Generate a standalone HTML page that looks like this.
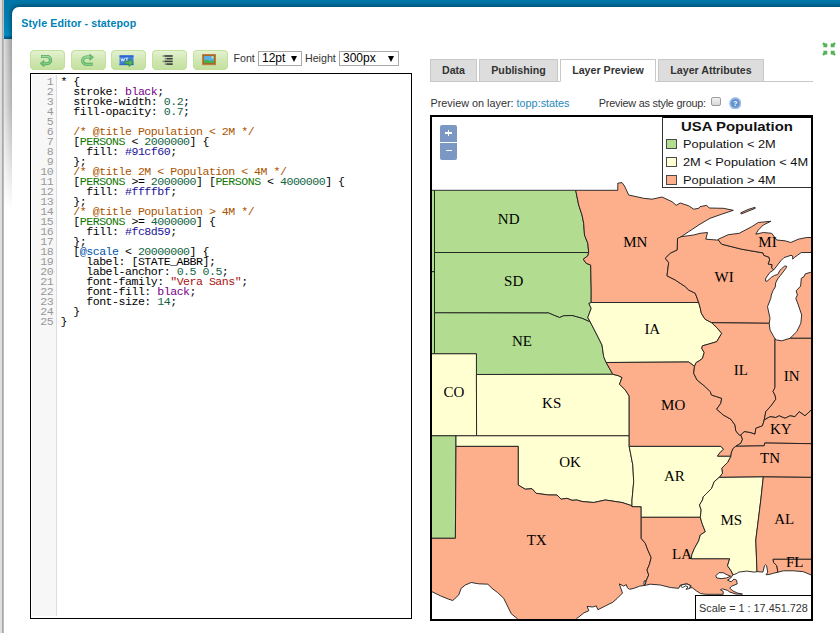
<!DOCTYPE html>
<html>
<head>
<meta charset="utf-8">
<title>Style Editor - statepop</title>
<style>
html,body{margin:0;padding:0;}
body{width:840px;height:633px;overflow:hidden;background:#fff;position:relative;font-family:"Liberation Sans",sans-serif;font-size:12px;color:#333;}
.abs{position:absolute;}
#bluetop{left:4px;top:0;width:836px;height:39px;background:linear-gradient(#0077a9 0,#0079ab 18%,#0089bf 80%,#008fc6 90%,#00689a 95%,#005a85 100%);}
#leftstrip{left:0;top:0;width:4px;height:633px;background:linear-gradient(90deg,#e2e2e2 0,#dcdcdc 45%,#a9a9a9 62%,#9f9f9f 80%,#e8e8e8 100%);}
#leftgrey{left:4px;top:39px;width:8px;height:170px;background:linear-gradient(90deg,#dedede,#a0a0a0);}
#leftfade{left:4px;top:39px;width:8px;height:170px;background:linear-gradient(rgba(255,255,255,0) 0,rgba(255,255,255,0.2) 40%,#fff 100%);}
#panel{left:12px;top:7px;width:840px;height:640px;background:#fff;border-radius:7px 0 0 0;}
#shclip{left:4px;top:0;width:836px;height:39px;overflow:hidden;}
#shclip div{position:absolute;left:8px;top:7px;width:840px;height:640px;border-radius:7px 0 0 0;box-shadow:0 0 5px 1px rgba(0,30,50,0.65);}
#title{left:21.300px;top:16px;letter-spacing:0.080px;font-weight:bold;font-size:10.67px;line-height:15px;color:#0082b6;white-space:nowrap;}
.tb{top:50px;width:35px;height:20px;border-radius:4.500px;background:linear-gradient(#e6f3d5 0,#d2e8b5 45%,#c3e09e 100%);box-shadow:inset 0 0 0 1px rgba(193,224,154,0.95);}
.tb svg{position:absolute;left:0;top:0;}
.lbl{font-size:10.67px;line-height:12px;color:#333;white-space:nowrap;}
.sel{top:51px;height:13px;border:1px solid #a9a9a9;background:#fff;font-size:12px;line-height:13px;color:#000;white-space:nowrap;}
.sel span{position:absolute;left:3px;top:0;}
.sel i{position:absolute;right:4px;top:4px;width:0;height:0;border-left:3.5px solid transparent;border-right:3.5px solid transparent;border-top:6px solid #000;}
#editor{left:30px;top:73px;width:380px;height:544px;border:1px solid #000;background:#fff;}
#gutter{left:1px;top:1px;width:24px;height:541px;background:#f7f7f7;border-right:1px solid #ddd;}
.ln,.cd{font-family:"Liberation Mono",monospace;font-size:11.6px;letter-spacing:-0.5px;line-height:10px;white-space:pre;margin:0;}
.ln{left:1px;top:2.750px;width:21.200px;text-align:right;color:#999;}
.cd{left:29.400px;top:2.750px;color:#000;}
.k{color:#708}.n{color:#164}.c{color:#a50}.v{color:#170}.a{color:#219}.d{color:#05a}.s{color:#a11}
.tab{top:59px;height:20.500px;border:1px solid #c8c8c8;background:#dddddd;font-weight:bold;font-size:10.67px;line-height:21px;color:#333;text-align:center;white-space:nowrap;}
.tab.on{background:#fff;border-bottom-color:#fff;height:20.500px;}
#tabline{left:430px;top:80.500px;width:383px;height:1px;background:#c8c8c8;}
.pl{top:96px;font-size:10.83px;line-height:14px;color:#333;white-space:nowrap;}
#cb{left:711.300px;top:96.800px;width:7.700px;height:7px;border:1px solid #9c9c9c;border-radius:2px;background:linear-gradient(#f2f2f2,#d8d8d8);}
#help{left:728.800px;top:96.600px;width:12.600px;height:12.600px;}
#map{left:430px;top:115px;width:379px;height:502px;border:2px solid #000;background:#fff;overflow:hidden;}
#fs{left:821.900px;top:41.900px;}
.sw{left:3px;width:9px;height:8px;border:1px solid #4a4a4a;}
.li{left:20.300px;font-size:11px;line-height:14px;color:#111;white-space:nowrap;transform:scaleX(1.162);transform-origin:0 0;}
</style>
</head>
<body>
<div class="abs" id="bluetop"></div>
<div class="abs" id="leftgrey"></div>
<div class="abs" id="leftfade"></div>
<div class="abs" id="leftstrip"></div>
<div class="abs" id="shclip"><div></div></div>
<div class="abs" id="panel"></div>
<div class="abs" id="title">Style Editor - statepop</div>

<!-- toolbar -->
<div class="abs tb" style="left:30px"><svg width="36" height="20" viewBox="0 0 36 20"><path d="M11 6.550H17A3.570 3.570 0 0 1 17 13.700H13.500" fill="none" stroke="#47a254" stroke-width="3"/><path d="M13.900 10.600V16.600L10.100 13.500Z" fill="#74c47a" stroke="#47a254" stroke-width="0.700" stroke-linejoin="round"/><path d="M11.400 6.550H17A3.570 3.570 0 0 1 17 13.700H13.500" fill="none" stroke="#85cf8a" stroke-width="1.700"/><path d="M11.600 6.200H17A3.900 3.900 0 0 1 20.500 8.500" fill="none" stroke="#c3eac4" stroke-width="0.600"/></svg></div>
<div class="abs tb" style="left:70.750px"><svg width="36" height="20" viewBox="0 0 36 20"><path d="M21.650 14.350H15.350A3.650 3.650 0 0 1 15.350 7.050H19" fill="none" stroke="#47a254" stroke-width="3"/><path d="M18.800 4.300V10.300L22.500 7.200Z" fill="#74c47a" stroke="#47a254" stroke-width="0.700" stroke-linejoin="round"/><path d="M21.300 14.350H15.350A3.650 3.650 0 0 1 15.350 7.050H19" fill="none" stroke="#85cf8a" stroke-width="1.700"/><path d="M12 9A3.900 3.900 0 0 1 15.350 6.700H18.600" fill="none" stroke="#c3eac4" stroke-width="0.600"/></svg></div>
<div class="abs tb" style="left:111.100px"><svg width="36" height="20" viewBox="0 0 36 20"><rect x="8.500" y="5.400" width="14" height="9.700" fill="#3f7fe0"/><rect x="8.500" y="5.400" width="14" height="1.500" fill="#2d66cc"/><rect x="8.500" y="13.800" width="14" height="1.300" fill="#2f6bd0"/><path d="M10 8.200l.9 3 .9-2.500.9 2.500.9-3M14.500 8.200h2.600M15.800 8.200v3" fill="none" stroke="#e6effd" stroke-width="0.900"/><path d="M13.800 11.300h4.200v-2.400l4.400 3.800-4.400 3.800v-2.400h-4.200z" fill="#58b45c" stroke="#2f8038" stroke-width="0.700" stroke-linejoin="round"/></svg></div>
<div class="abs tb" style="left:152.250px"><svg width="36" height="20" viewBox="0 0 36 20"><g fill="#7d8474"><rect x="10.600" y="5.200" width="3" height="1.600"/><rect x="12.700" y="7.900" width="3" height="1.600"/><rect x="10.600" y="10.600" width="3" height="1.600"/><rect x="12.700" y="13.300" width="3" height="1.600"/></g><g fill="#3a3a3a"><rect x="13" y="5.200" width="7.700" height="1.600"/><rect x="15" y="7.900" width="5.700" height="1.600"/><rect x="13" y="10.600" width="7.700" height="1.600"/><rect x="15" y="13.300" width="5.700" height="1.600"/></g></svg></div>
<div class="abs tb" style="left:193px"><svg width="36" height="20" viewBox="0 0 36 20"><rect x="9.100" y="4" width="13.900" height="11.100" fill="#a7672c"/><rect x="9.500" y="4.400" width="13.100" height="10.300" fill="none" stroke="#c58a4a" stroke-width="0.700"/><rect x="11.100" y="6" width="9.900" height="7" fill="#5aaeea"/><path d="M11.100 10.800c2-1.900 4-1 5.400.2 1.500-1 3-1.100 4.500-.3v2.300h-9.900z" fill="#43b04a"/><circle cx="19.500" cy="7.300" r="1.100" fill="#f7e35c"/></svg></div>
<div class="abs lbl" style="left:233.500px;top:52px">Font</div>
<div class="abs sel" style="left:258px;width:42px"><span>12pt</span><i></i></div>
<div class="abs lbl" style="left:305px;top:52px">Height</div>
<div class="abs sel" style="left:339px;width:58px"><span>300px</span><i></i></div>

<!-- editor -->
<div class="abs" id="editor">
<div class="abs" id="gutter"></div>
<pre class="abs ln">1
2
3
4
5
6
7
8
9
10
11
12
13
14
15
16
17
18
19
20
21
22
23
24
25</pre>
<pre class="abs cd">* {
  stroke: <span class="k">black</span>;
  stroke-width: <span class="n">0.2</span>;
  fill-opacity: <span class="n">0.7</span>;

  <span class="c">/* @title Population &lt; 2M */</span>
  [<span class="v">PERSONS</span> &lt; <span class="n">2000000</span>] {
    fill: <span class="a">#91cf60</span>;
  };
  <span class="c">/* @title 2M &lt; Population &lt; 4M */</span>
  [<span class="v">PERSONS</span> &gt;= <span class="n">2000000</span>] [<span class="v">PERSONS</span> &lt; <span class="n">4000000</span>] {
    fill: <span class="a">#ffffbf</span>;
  };
  <span class="c">/* @title Population &gt; 4M */</span>
  [<span class="v">PERSONS</span> &gt;= <span class="n">4000000</span>] {
    fill: <span class="a">#fc8d59</span>;
  };
  [<span class="d">@scale</span> &lt; <span class="n">20000000</span>] {
    label: [STATE_ABBR];
    label-anchor: <span class="n">0.5</span> <span class="n">0.5</span>;
    font-family: <span class="s">"Vera Sans"</span>;
    font-fill: <span class="k">black</span>;
    font-size: <span class="n">14</span>;
  }
}</pre>
</div>

<!-- tabs -->
<div class="abs" id="tabline"></div>
<div class="abs tab" style="left:430px;width:45px">Data</div>
<div class="abs tab" style="left:479px;width:77px">Publishing</div>
<div class="abs tab on" style="left:560px;width:94px">Layer Preview</div>
<div class="abs tab" style="left:658px;width:104px">Layer Attributes</div>
<div class="abs pl" style="left:430.500px">Preview on layer: <span style="color:#2a88b8">topp:states</span></div>
<div class="abs pl" style="left:598.800px;letter-spacing:-0.210px">Preview as style group:</div>
<div class="abs" id="cb"></div>
<svg class="abs" id="help" viewBox="0 0 12.600 12.600"><circle cx="6.300" cy="6.300" r="6.200" fill="#adc6e8"/><circle cx="6.300" cy="6.300" r="5.200" fill="#8fb1de"/><circle cx="6.300" cy="6.300" r="4.100" fill="#5d90d0"/><text x="6.300" y="9" font-family="Liberation Sans" font-weight="bold" font-size="7.500" fill="#fff" text-anchor="middle">?</text></svg>

<!-- fullscreen icon -->
<svg class="abs" id="fs" width="14" height="14" viewBox="0 0 14 14"><g fill="#55b058"><path d="M0.200 1.700L1.700 0.200L3.300 1.600L5.300 1.400L5.300 5.300L1.300 5.300L1.500 3.200Z"/><path transform="translate(14,0) scale(-1,1)" d="M0.200 1.700L1.700 0.200L3.300 1.600L5.300 1.400L5.300 5.300L1.300 5.300L1.500 3.200Z"/><path transform="translate(0,14) scale(1,-1)" d="M0.200 1.700L1.700 0.200L3.300 1.600L5.300 1.400L5.300 5.300L1.300 5.300L1.500 3.200Z"/><path transform="translate(14,14) scale(-1,-1)" d="M0.200 1.700L1.700 0.200L3.300 1.600L5.300 1.400L5.300 5.300L1.300 5.300L1.500 3.200Z"/></g></svg>

<!-- map -->
<div class="abs" id="map">
<!--MAPSTART-->
<svg class="abs" style="left:0;top:0" width="379" height="502" viewBox="432 117 379 502">
<g stroke="#1c1c1c" stroke-width="0.9" stroke-linejoin="round">
<path fill="#b2dd90" d="M428 190.3L434.5 190.3L434.5 271.7L428 271.7Z"/>
<path fill="#b2dd90" d="M428 271.7L434.5 271.7L434.5 353.8L428 353.8Z"/>
<path fill="#b2dd90" d="M434.5 190.3L575.7 190.3L578.7 205L582 215L583.7 223.3L584.5 235L587.8 243.3L588.7 252.5L434.5 252.5Z"/>
<path fill="#b2dd90" d="M434.5 252.5L588.7 252.5L587.8 255.8L583.3 259.2L586.2 263.3L590.7 265L591.2 290L591.2 302.5L588.9 303.5L591.2 308.3L587.8 317.5L590.3 322L582 318.3L572 315.5L563.7 315.8L559.5 317.5L554 315.3L548.7 313L434.5 312.8Z"/>
<path fill="#b2dd90" d="M434.5 312.8L548.7 313L554 315.3L559.5 317.5L563.7 315.8L572 315.5L582 318.3L590.3 322L597 335L602 345L603.7 356.7L606.2 362.5L612.8 374.3L476.4 374.5L476.4 353.8L434.5 353.8Z"/>
<path fill="#ffffd2" d="M428 353.8L476.4 353.8L476.6 435.8L428 435.8Z"/>
<path fill="#ffffd2" d="M476.4 374.5L612.8 374.3L618 375.5L622 377.5L619.5 384.2L625.3 390L629.2 396L629.2 435.8L476.6 435.8Z"/>
<path fill="#b2dd90" d="M428 435.8L456 435.8L455.4 538.3L428 538.3Z"/>
<path fill="#ffffd2" d="M456 435.8L629.2 435.8L629.2 446.4L632.8 465L633.7 481.7L632 500L632 505.8L622 502.5L605.3 500L593.7 502.5L582 501.5L577 500L572 500.3L567 498.3L561.2 499.2L557 495L548.7 495L536.2 493.3L532 488.7L525.3 489.2L518.2 485L518.2 446.4L456 446.4Z"/>
<path fill="#fdaf8b" d="M428 538.3L455.4 538.3L456 446.4L518.2 446.4L518.2 485L525.3 489.2L532 488.7L536.2 493.3L548.7 495L557 495L561.2 499.2L567 498.3L572 500.3L577 500L582 501.5L593.7 502.5L605.3 500L622 502.5L632 505.8L632 506.6L641.2 506.7L641.2 517.3L641.2 538.3L645.3 543.3L647.8 550L651.2 557.5L649.5 564.2L647 570L648.7 575L646.2 580.8L644.5 585.5L639.7 586.1L634.3 588.2L629.5 589.3L627.3 587.7L626.3 584.5L623.6 586.1L619.3 583.9L620.4 587.1L622.5 593L617.2 598.4L612.9 602.2L605.4 605.9L597.9 609.7L596.3 605.9L592.5 607L587.1 606.4L588.8 610.7L583.9 612.9L576.4 618.8L570 626L521 626L517.5 618.8L511.3 613.8L507 605L503.7 598.3L497.5 592.5L492 588.3L487.8 584.2L478.7 583.8L471.2 582.5L465.3 585L461.2 588.3L458.7 595L452.8 600.5L448.7 599.2L440.3 595.8L432 591.7L428 590.7Z"/>
<path fill="#fdaf8b" d="M575.7 190.3L617.8 190.3L617.8 183.2L622 182.6L624.5 186L628.7 195L643.7 198.3L652 199.2L662 197L672 201.7L676.2 205.3L680.3 203L688.7 205.8L693.7 209.2L698.7 208.3L700 206.7L706.7 205.3L709.2 208L723.3 208.3L733.3 210.3L721.7 214.2L710 218.3L700 224.2L688.7 231.7L681.2 236.7L679.5 237.5L677.5 238.5L677.3 250L670.3 253.3L665.3 258.3L668.7 262.5L667 275.8L675.3 280L685.3 286.7L688.7 290L695.3 293.3L698.7 302.5L591.2 302.5L591.2 290L590.7 265L586.2 263.3L583.3 259.2L587.8 255.8L588.7 252.5L587.8 243.3L584.5 235L583.7 223.3L582 215L578.7 205L575.7 190.3Z"/>
<path fill="#ffffd2" d="M591.2 302.5L698.7 302.5L700.3 308.3L701.2 313L705 319.2L711.7 322.7L716.7 327.5L721.7 333.3L716.7 341.7L708.3 344.2L702.5 345.8L701.7 348.3L704.2 352.5L702.5 358.3L699 361L696.2 362.5L694.5 366.3L688.7 362L606.2 362.5L603.7 356.7L602 345L597 335L590.3 322L587.8 317.5L591.2 308.3L588.9 303.5L591.2 302.5Z"/>
<path fill="#fdaf8b" d="M606.2 362.5L688.7 362L694.5 366.3L693.7 373.3L697 380L705.3 386.7L710.3 391.7L711.5 395L716.7 396.7L721.7 398.3L720.8 403.3L716.7 409.2L723.3 415L730.8 419.2L735 425L735.8 430.8L739.2 435L740.8 435L742.5 439.2L740.8 443.3L735.8 446.3L733.3 448.3L731.5 452L730.8 456.3L717.5 456.3L717.5 455.8L720 452.5L723.3 449.2L720.8 446.4L629.2 446.4L629.2 435.8L629.2 396L625.3 390L619.5 384.2L622 377.5L618 375.5L612.8 374.3L606.2 362.5Z"/>
<path fill="#fdaf8b" d="M679.5 237.5L681.2 236.7L693.7 235L700 233.3L707.5 232.5L705.8 239.2L716.7 240L718.3 240L721.7 244.2L741.7 249.2L755 251.5L763 252.9L763.8 255.3L769 257.2L769.7 260L768.2 264L772.1 264.7L771.7 267.9L773.7 269.9L769.7 272.6L765.8 278.2L765.4 280.9L767 281.3L771.3 277.4L774.5 275.4L777.6 274.6L780 270.3L781.6 268.7L784.8 265.9L786.7 266.3L785.9 268.3L783.2 271.9L780.4 275.4L777.6 279L775.7 282.9L775.3 286.9L772.9 290.8L771.3 295L770.8 298.3L767.5 306.7L770 318.3L769.2 323.3L711.7 322.7L705 319.2L701.2 313L700.3 308.3L698.7 302.5L695.3 293.3L688.7 290L685.3 286.7L675.3 280L667 275.8L668.7 262.5L665.3 258.3L670.3 253.3L677.3 250L677.5 238.5L679.5 237.5Z"/>
<path fill="#fdaf8b" d="M718.3 240L718.3 239.2L728.3 234.7L739.2 233.3L751.7 226.7L758.3 222.5L770.8 221.3L763.3 225L758.3 230L755.8 234.2L763.3 232.5L771.7 233.3L776.7 240L785 240.8L790.8 242.5L798.3 239.2L806.7 237.5L816 237.5L816 252.5L801.3 252.5L797.4 255.3L794.2 257.6L792.7 259.2L792.7 256L791 255.3L784 257.6L780.8 260.8L773.7 269.9L771.7 267.9L772.1 264.7L768.2 264L769.7 260L769 257.2L763.8 255.3L763 252.9L755 251.5L741.7 249.2L721.7 244.2L718.3 240Z"/>
<path fill="#fdaf8b" d="M790 338.3L796.7 331.7L800.8 323.3L801.7 315L798.3 305L795.8 298.3L797.4 295L796.2 290.8L800.6 286.1L801.3 278.2L804.1 276.6L805.3 273.8L810.8 272.3L816 271.5L816 338.3Z"/>
<path fill="#fdaf8b" d="M711.7 322.7L769.2 323.3L770 330L773.3 335.8L775 338.8L775 387.5L773 391.5L775 395L775.8 399.2L771.7 405L765.8 411.7L764.2 420L762.5 425.8L755.8 428.3L755 434.2L750 432.5L744.2 431.7L740.8 435L739.2 435L735.8 430.8L735 425L730.8 419.2L723.3 415L716.7 409.2L720.8 403.3L721.7 398.3L716.7 396.7L711.5 395L710.3 391.7L705.3 386.7L697 380L693.7 373.3L694.5 366.3L696.2 362.5L699 361L702.5 358.3L704.2 352.5L701.7 348.3L702.5 345.8L708.3 344.2L716.7 341.7L721.7 333.3L716.7 327.5L711.7 322.7Z"/>
<path fill="#fdaf8b" d="M775 338.8L776.7 340L781.7 340.8L790 338.3L816 338.3L816 408L811.3 410L805 415.8L799.2 411.7L795 416.7L790 415.8L785 418.3L779.2 415.8L775.8 417.5L770 416.7L764.2 420L765.8 411.7L771.7 405L775.8 399.2L775 395L773 391.5L775 387.5L775 338.8Z"/>
<path fill="#fdaf8b" d="M740.8 435L744.2 431.7L750 432.5L755 434.2L755.8 428.3L762.5 425.8L764.2 420L770 416.7L775.8 417.5L779.2 415.8L785 418.3L790 415.8L795 416.7L799.2 411.7L805 415.8L811.3 410L816 408L816 443.7L811.3 443.7L764.7 443L764.2 445.8L735.8 446.3L740.8 443.3L742.5 439.2L740.8 435Z"/>
<path fill="#fdaf8b" d="M735.8 446.3L764.2 445.8L764.7 443L811.3 443.7L816 443.7L816 477.4L811.3 477.4L763.3 476.9L719.2 477.4L722.5 473.3L721.7 468.3L727.5 462.5L730.8 456.3L731.5 452L733.3 448.3L735.8 446.3Z"/>
<path fill="#ffffd2" d="M629.2 446.4L720.8 446.4L723.3 449.2L720 452.5L717.5 455.8L717.5 456.3L730.8 456.3L727.5 462.5L721.7 468.3L722.5 473.3L719.2 477.4L714.2 481.7L711.7 488.3L706.7 493.3L703.3 496.7L702.5 500L699.5 505L701.2 510L700.3 517.3L641.2 517.3L641.2 506.7L632 506.6L632 505.8L632 500L633.7 481.7L632.8 465L629.2 446.4Z"/>
<path fill="#fdaf8b" d="M641.2 517.3L700.3 517.3L702 523.3L705.3 531.7L700.3 535L698.7 540.8L694.5 548.3L692 554.2L691.2 558.7L730 558.7L729.7 558.7L727.5 565.7L731.3 571.1L732.9 574.8L730.7 578L727.5 580.2L731.3 581.8L733.9 579.1L736.6 580.2L737.2 583.9L731.8 586.1L729.7 588.2L732.9 590.9L737.2 593L742.5 594.1L736.1 594.1L729.7 592L727.5 590.4L722.2 588.8L720.5 589.8L723.2 591.4L723.2 594.3L714.6 594.3L706.1 594.3L700.7 593.6L696.4 590.9L692.1 587.6L689.5 588L691.2 585.8L687 583.8L680.3 585L678.7 588.3L670.3 587.5L660.3 585L650.3 584.2L644.5 585.5L646.2 580.8L648.7 575L647 570L649.5 564.2L651.2 557.5L647.8 550L645.3 543.3L641.2 538.3L641.2 517.3Z"/>
<path fill="#ffffd2" d="M719.2 477.4L763.3 476.9L760.8 500L755.8 540L757 571.6L754.3 572.1L746.8 571.1L738.8 572.1L736.1 573.8L732.9 574.8L731.3 571.1L727.5 565.7L729.7 558.7L691.2 558.7L692 554.2L694.5 548.3L698.7 540.8L700.3 535L705.3 531.7L702 523.3L700.3 517.3L701.2 510L699.5 505L702.5 500L703.3 496.7L706.7 493.3L711.7 488.3L714.2 481.7L719.2 477.4Z"/>
<path fill="#fdaf8b" d="M763.3 476.9L811.3 477.4L816 477.4L816 559.3L773.1 559.3L773.6 562.5L776.8 565.7L777.9 572.2L773.6 573.2L769.8 574.3L766.1 574.8L767.7 572.1L766.6 565.7L765.5 564.8L764.5 565.7L762.9 572.1L757 571.6L755.8 540L760.8 500L763.3 476.9Z"/>
<path fill="#fdaf8b" d="M816 559.3L773.1 559.3L773.6 562.5L776.8 565.7L777.9 572.2L783.3 570.8L793.3 570.8L803.3 571.7L811.3 575L816 576.5Z"/>
<path fill="#fdaf8b" d="M740.8 212.8L748 209.5L755 207.3L755.3 208.3L748 211.2L741.3 214Z"/>
<path fill="#fff" d="M715.7 575.9L718.9 572.7L723.2 572.7L727 574.8L730.6 576.2L726.4 578L721.1 578.6L716.8 578Z"/>
<path fill="#fff" d="M680.5 586L683 584.5L687 584L690.5 585.6L689.5 588.5L686 589.3L688 587L685.5 585.8L682.5 587.6Z"/>
<path fill="#fff" d="M644.2 581L645.8 580.5L645.5 584L643.8 584.5Z"/>
</g>
<g font-family="Liberation Serif" font-size="15" fill="#000" text-anchor="middle">
<text x="508.7" y="224.2">ND</text>
<text x="513.7" y="285.8">SD</text>
<text x="635.3" y="246.8">MN</text>
<text x="767.5" y="246.8">MI</text>
<text x="724.2" y="281.7">WI</text>
<text x="522" y="345.5">NE</text>
<text x="453.9" y="397.2">CO</text>
<text x="652.3" y="333.7">IA</text>
<text x="740.8" y="374.7">IL</text>
<text x="791.7" y="381.2">IN</text>
<text x="551.7" y="408">KS</text>
<text x="673.2" y="410.3">MO</text>
<text x="674.3" y="480.9">AR</text>
<text x="570" y="467.1">OK</text>
<text x="780.8" y="434.2">KY</text>
<text x="770" y="463.3">TN</text>
<text x="536.7" y="545">TX</text>
<text x="682" y="559.2">LA</text>
<text x="731.3" y="525.3">MS</text>
<text x="784.2" y="524.2">AL</text>
<text x="794.7" y="567.4">FL</text>
</g>
</svg>
<!--MAPEND-->
<!--OVERLAY-->
<div class="abs" style="left:8px;top:8px;width:17px;height:17px;border-radius:2px 2px 0 0;background:#7b98c4;"></div>
<div class="abs" style="left:8px;top:26px;width:17px;height:17px;border-radius:0 0 2px 2px;background:#7b98c4;"></div>
<div class="abs" style="left:13.300px;top:14.900px;width:6.400px;height:1.700px;background:#fff;"></div>
<div class="abs" style="left:15.650px;top:12.500px;width:1.700px;height:6.400px;background:#fff;"></div>
<div class="abs" style="left:13.600px;top:32.900px;width:6.300px;height:1.500px;background:#fff;"></div>
<div class="abs" id="legend" style="left:230px;top:0;width:149px;height:71px;background:#fff;border-left:1px solid #333;border-bottom:1px solid #333;box-sizing:border-box;"><div class="abs" style="left:0;top:0;width:148px;height:0.600px;background:#000"></div>
<div class="abs" style="left:0;top:1.500px;width:148px;text-align:center;font-weight:bold;font-size:13px;line-height:16px;color:#111;transform:scaleX(1.145);transform-origin:74.500px 0;">USA Population</div>
<div class="abs sw" style="top:22px;background:#b2dd90"></div><div class="abs li" style="top:20px">Population &lt; 2M</div>
<div class="abs sw" style="top:40px;background:#ffffd2"></div><div class="abs li" style="top:38px">2M &lt; Population &lt; 4M</div>
<div class="abs sw" style="top:58px;background:#fdaf8b"></div><div class="abs li" style="top:56px">Population &gt; 4M</div>
</div>
<div class="abs" style="left:263px;top:478px;width:120px;height:30px;background:#fff;border:1px solid #000;"></div>
<div class="abs" style="left:267px;top:484px;font-size:10.850px;line-height:14px;color:#333;white-space:nowrap;">Scale = 1 : 17.451.728</div>
<!--/OVERLAY-->
</div>
</body>
</html>
